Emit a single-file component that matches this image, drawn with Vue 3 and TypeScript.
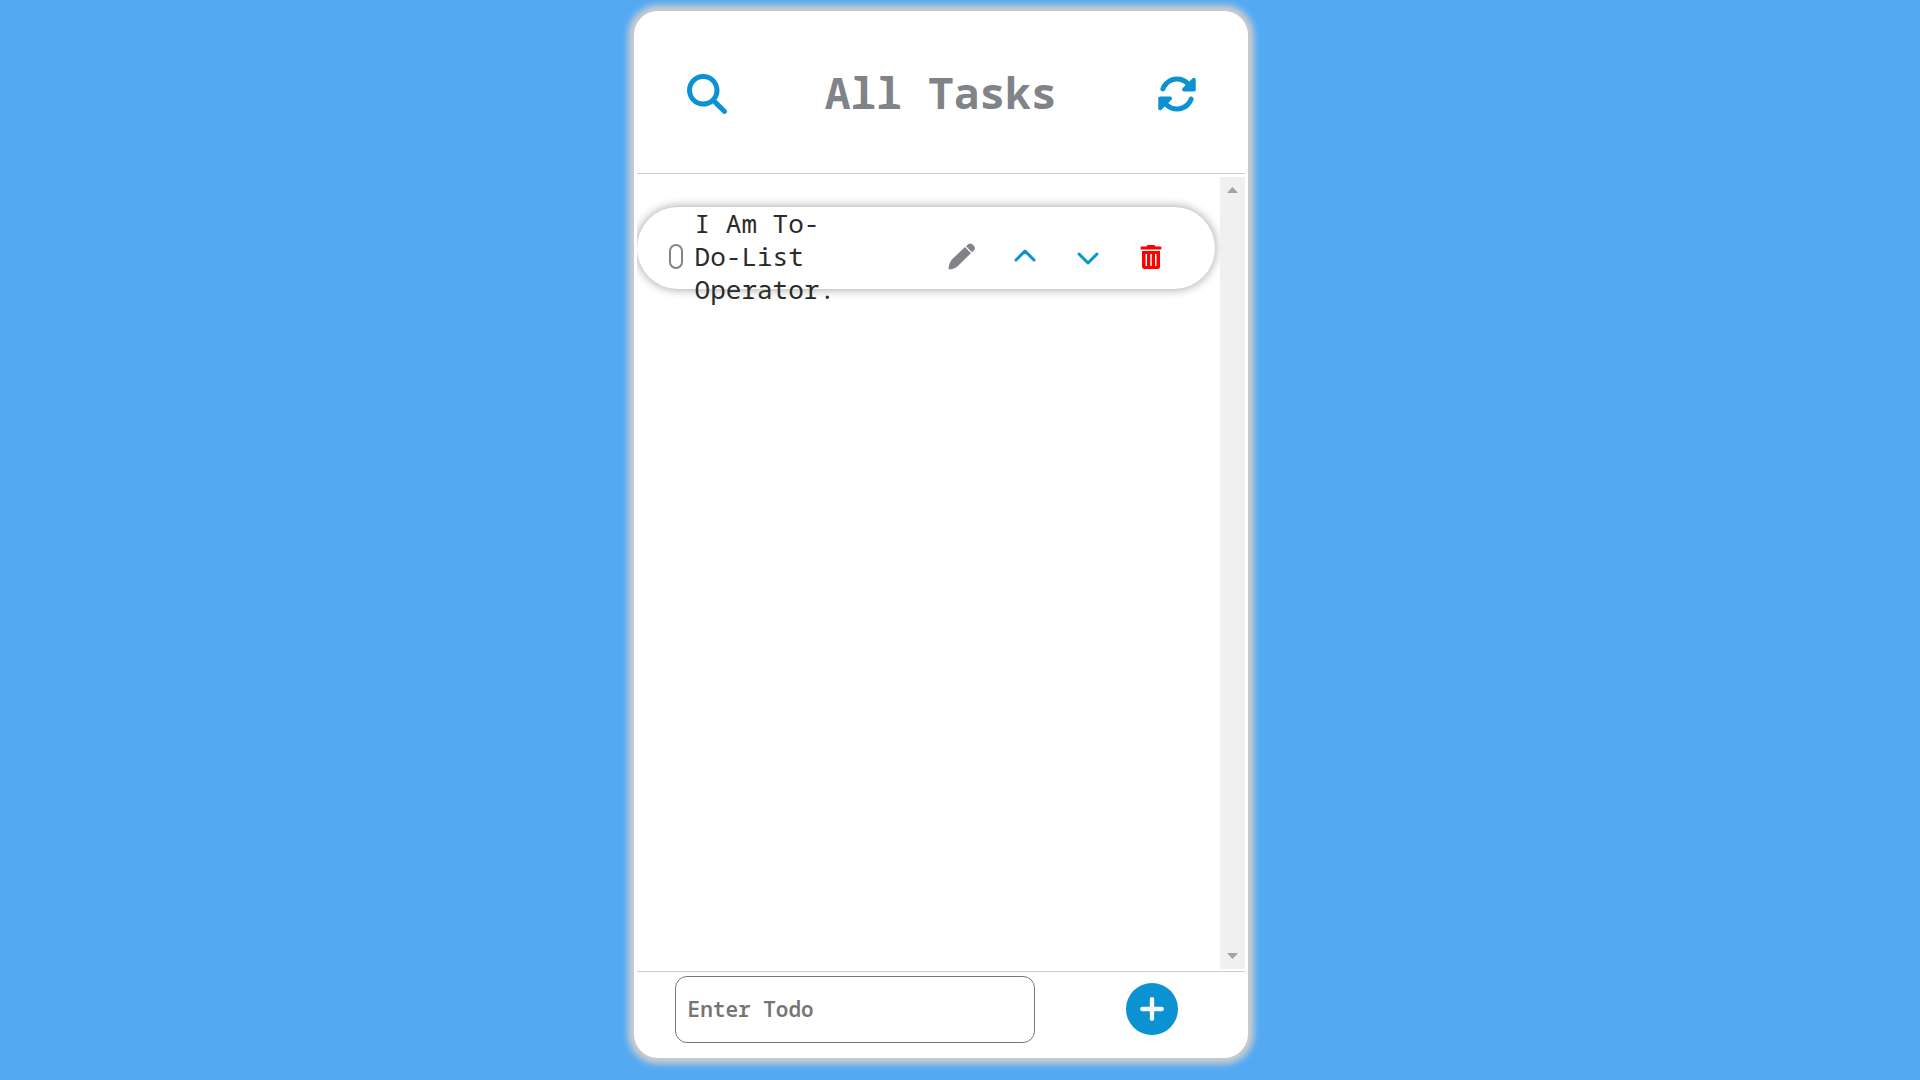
<script setup lang="ts">
import { ref } from 'vue'

interface Task {
  id: number
  text: string
  done: boolean
}

const tasks = ref<Task[]>([{ id: 1, text: 'I Am To-Do-List Operator.', done: false }])
const draft = ref('')

function addTask() {
  const text = draft.value.trim()
  if (!text) return
  tasks.value.push({ id: Date.now(), text, done: false })
  draft.value = ''
}

function removeTask(index: number) {
  tasks.value.splice(index, 1)
}

function moveTask(index: number, step: number) {
  const target = index + step
  if (target < 0 || target >= tasks.value.length) return
  const [task] = tasks.value.splice(index, 1)
  tasks.value.splice(target, 0, task)
}
</script>

<template>
  <main class="card">
    <header class="header">
      <button type="button" class="icon-button" aria-label="Search">
        <svg class="icon-large" viewBox="0 0 512 512">
          <path d="M416 208c0 45.9-14.9 88.3-40 122.7L502.6 457.4c12.5 12.5 12.5 32.8 0 45.3s-32.8 12.5-45.3 0L330.7 376c-34.4 25.2-76.8 40-122.7 40C93.1 416 0 322.9 0 208S93.1 0 208 0S416 93.1 416 208zM208 352a144 144 0 1 0 0-288 144 144 0 1 0 0 288z" />
        </svg>
      </button>
      <h1 class="title">All Tasks</h1>
      <button type="button" class="icon-button" aria-label="Refresh">
        <svg class="icon-large" viewBox="0 0 512 512">
          <path d="M142.9 142.9c62.2-62.2 162.7-62.5 225.3-1L327 183c-6.9 6.9-8.9 17.2-5.2 26.2s12.5 14.8 22.2 14.8H472c13.3 0 24-10.7 24-24V72c0-9.7-5.8-18.5-14.8-22.2s-19.3-1.7-26.2 5.2L413.4 96.6c-87.6-86.5-228.7-86.2-315.8 1C73.2 122 55.6 150.7 44.8 181.4c-5.9 16.7 2.9 34.9 19.5 40.8s34.9-2.9 40.8-19.5c7.7-21.8 20.2-42.3 37.8-59.8zM16 312V440c0 9.7 5.8 18.5 14.8 22.2s19.3 1.7 26.2-5.2l41.6-41.6c87.6 86.5 228.7 86.2 315.8-1c24.4-24.4 42.1-53.1 52.9-83.7c5.9-16.7-2.9-34.9-19.5-40.8s-34.9 2.9-40.8 19.5c-7.7 21.8-20.2 42.3-37.8 59.8c-62.2 62.2-162.7 62.5-225.3 1L185 329c6.9-6.9 8.9-17.2 5.2-26.2s-12.5-14.8-22.2-14.8H40c-13.3 0-24 10.7-24 24z" />
        </svg>
      </button>
    </header>

    <section class="body">
      <ul class="list">
        <li v-for="(task, index) in tasks" :key="task.id" class="item">
          <div class="item-row">
            <input :id="`task-${task.id}`" v-model="task.done" type="checkbox" class="tick" />
            <label :for="`task-${task.id}`" class="item-text">{{ task.text }}</label>
            <div class="actions">
              <button type="button" class="icon-button muted" aria-label="Edit">
                <svg class="icon-small" viewBox="0 0 28 28">
                  <path d="M0.500 26.500C0.700 22.600 1.600 19.600 3.600 16.800L17 4L23 10.200L9.600 23.200C6.800 25.500 4 26.300 0.500 26.500Z" />
                  <path d="M18 3.200L20.500 1C21.700 0.100 23.100 0.200 24.300 1.300L26.200 3.300C27.200 4.500 27.300 6 26.300 7.100L24 9.300Z" />
                </svg>
              </button>
              <button type="button" class="icon-button" aria-label="Move up" @click="moveTask(index, -1)">
                <svg class="icon-small" viewBox="0 0 28 28">
                  <path class="stroke" d="M5 17L14 8L23 17" />
                </svg>
              </button>
              <button type="button" class="icon-button" aria-label="Move down" @click="moveTask(index, 1)">
                <svg class="icon-small" viewBox="0 0 28 28">
                  <path class="stroke" d="M5 11L14 20L23 11" />
                </svg>
              </button>
              <button type="button" class="icon-button danger" aria-label="Delete" @click="removeTask(index)">
                <svg class="icon-small" viewBox="0 0 28 28">
                  <path d="M4.500 3.500H9.500L10.500 2H17.500L18.500 3.500H23.500Q24.500 3.500 24.500 5T23.500 6.500H4.500Q3.500 6.500 3.500 5T4.500 3.500Z" />
                  <path fill-rule="evenodd" d="M5 8H23V23.500Q23 26 20.500 26H7.500Q5 26 5 23.500ZM8.500 11V23H10V11ZM13.300 11V23H14.800V11ZM18 11V23H19.500V11Z" />
                </svg>
              </button>
            </div>
          </div>
        </li>
      </ul>
      <div class="scrollbar" aria-hidden="true">
        <svg class="arrow" viewBox="0 0 11 6"><path d="M0 6L5.500 0L11 6Z" /></svg>
        <svg class="arrow" viewBox="0 0 11 6"><path d="M0 0L5.500 6L11 0Z" /></svg>
      </div>
    </section>

    <form class="footer" @submit.prevent="addTask">
      <input v-model="draft" type="text" class="entry" placeholder="Enter Todo" aria-label="Enter Todo" />
      <button type="submit" class="add" aria-label="Add task">
        <svg class="plus" viewBox="0 0 24 24"><path d="M12 3V21M3 12H21" /></svg>
      </button>
    </form>
  </main>
</template>

<style>
body {
  margin: 0;
  background: #54a9f3;
}

#app {
  display: flex;
  min-height: 100vh;
}
</style>

<style scoped>
.card {
  box-sizing: border-box;
  display: flex;
  flex-direction: column;
  width: 32%;
  margin: 11px auto 22px 33%;
  padding: 3px;
  border-radius: 24px;
  background: #fff;
  box-shadow: 0 0 6px 6px #ccc;
  font-family: Consolas, "Noto Sans Mono", "DejaVu Sans Mono", monospace;
}

.header {
  display: flex;
  flex: 0 0 159px;
  align-items: center;
  justify-content: space-between;
  padding: 0 48px 0 50px;
  border-bottom: 1px solid #ccc;
}

.title {
  margin: 0;
  padding: 0 2px 2px 0;
  color: #808388;
  font-size: 43px;
  line-height: 52px;
}

.icon-button {
  display: flex;
  padding: 0;
  border: 0;
  background: none;
  color: #0a92d3;
  cursor: pointer;
}

.icon-button.muted {
  color: #808388;
}

.icon-button.danger {
  color: #f00;
}

.icon-large {
  width: 40px;
  height: 40px;
  fill: currentColor;
}

.icon-small {
  width: 28px;
  height: 28px;
  fill: currentColor;
}

.stroke {
  fill: none;
  stroke: currentColor;
  stroke-width: 3;
  stroke-linecap: round;
  stroke-linejoin: round;
}

.body {
  display: flex;
  flex: 1;
  min-height: 0;
  padding: 3px 0 2px;
}

.list {
  flex: 1;
  min-width: 0;
  margin: 0;
  padding: 30px 5px 0 0;
  overflow: hidden;
  list-style: none;
}

.item {
  height: 82px;
  margin-bottom: 30px;
  border-radius: 41px;
  box-shadow: 0 0 10px 1px #aaa;
}

.item-row {
  display: flex;
  align-items: center;
  padding: 0 50px 0 32px;
}

.tick {
  flex: none;
  appearance: none;
  width: 14px;
  height: 25px;
  margin: 0;
  border: 2px solid #808388;
  border-radius: 7px;
}

.tick:checked {
  background: #0a92d3;
}

.item-text {
  width: 160px;
  margin-left: 12px;
  color: #2b2b2b;
  font-size: 26px;
  line-height: 33px;
}

.actions {
  display: flex;
  gap: 35px;
  margin-left: auto;
}

.scrollbar {
  display: flex;
  flex: 0 0 25px;
  flex-direction: column;
  align-items: center;
  justify-content: space-between;
  box-sizing: border-box;
  padding: 10px 0;
  background: #f0f0f0;
}

.arrow {
  width: 11px;
  height: 6px;
  fill: #a3a3a3;
}

.footer {
  display: flex;
  flex: 0 0 79px;
  align-items: flex-start;
  justify-content: space-between;
  padding: 4px 67px 0 38px;
  border-top: 1px solid #ccc;
}

.entry {
  box-sizing: border-box;
  width: 360px;
  height: 67px;
  padding: 0 12px 2px;
  border: 1px solid #777;
  border-radius: 12px;
  background: #fff;
  font-family: inherit;
  font-size: 21px;
  font-weight: 600;
}

.entry::placeholder {
  color: #757575;
}

.add {
  display: flex;
  align-items: center;
  justify-content: center;
  width: 52px;
  height: 52px;
  margin: 7px 0 0;
  padding: 0;
  border: 0;
  border-radius: 50%;
  background: #0a92d3;
  cursor: pointer;
}

.plus {
  width: 26px;
  height: 26px;
  fill: none;
  stroke: #fff;
  stroke-width: 4;
  stroke-linecap: round;
}
</style>
